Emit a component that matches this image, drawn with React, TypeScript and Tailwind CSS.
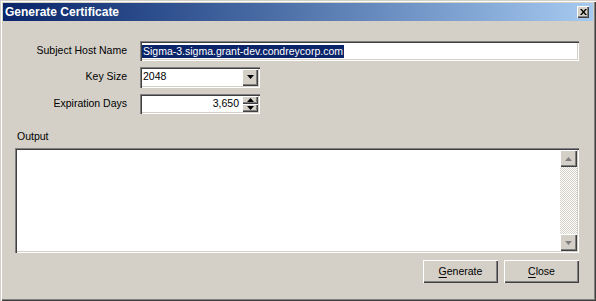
import React from 'react'

const sunken =
  'shadow-[inset_1px_1px_0_#808080,inset_2px_2px_0_#404040,inset_-1px_-1px_0_#ffffff,inset_-2px_-2px_0_#d4d0c8]'
const raised =
  'shadow-[inset_1px_1px_0_#ffffff,inset_-1px_-1px_0_#404040,inset_-2px_-2px_0_#808080]'

function Arrow({ dir, color = '#000' }: { dir: 'up' | 'down'; color?: string }) {
  return (
    <svg width="7" height="4" viewBox="0 0 7 4">
      {dir === 'down' ? (
        <polygon points="0,0 7,0 3.5,4" fill={color} />
      ) : (
        <polygon points="0,4 7,4 3.5,0" fill={color} />
      )}
    </svg>
  )
}

function Label({ children }: { children: React.ReactNode }) {
  return <div className="w-[125px] text-right pr-[1px]">{children}</div>
}

export default function App() {
  return (
    <div className="w-[596px] h-[301px] bg-[#d4d0c8] p-[3px] flex flex-col text-[10.5px] text-black font-['Liberation_Sans',Arial,sans-serif] shadow-[inset_1px_1px_0_#d4d0c8,inset_2px_2px_0_#ffffff,inset_-1px_-1px_0_#404040,inset_-2px_-2px_0_#808080]">
      {/* Title bar */}
      <div className="h-[18px] flex items-center justify-between pl-[2px] pr-[4px] bg-gradient-to-r from-[#0a246a] to-[#a6caf0]">
        <span className="text-white font-bold text-[12px] leading-none">Generate Certificate</span>
        <div className={`w-[12px] h-[12px] bg-[#d4d0c8] flex items-center justify-center ${raised}`}>
          <svg width="7" height="6" viewBox="0 0 7 6">
            <path d="M0 0 L1.8 0 L3.5 2 L5.2 0 L7 0 L4.4 3 L7 6 L5.2 6 L3.5 4 L1.8 6 L0 6 L2.6 3 Z" fill="#000" />
          </svg>
        </div>
      </div>

      {/* Form */}
      <div className="mt-[20px] flex flex-col">
        <div className="flex items-center h-[20px]">
          <Label>Subject Host Name</Label>
          <div className={`ml-[12px] w-[439px] h-[20px] bg-white flex items-center pl-[2px] ${sunken}`}>
            <span className="bg-[#0a246a] text-white leading-[13px] px-[1px]">
              Sigma-3.sigma.grant-dev.condreycorp.com
            </span>
          </div>
        </div>

        <div className="flex items-center h-[20px] mt-[6px]">
          <Label>Key Size</Label>
          <div className={`ml-[12px] w-[120px] h-[21px] bg-white flex items-center justify-between pl-[3px] pr-[2px] ${sunken}`}>
            <span>2048</span>
            <div className={`w-[16px] h-[17px] bg-[#d4d0c8] flex items-center justify-center ${raised}`}>
              <Arrow dir="down" />
            </div>
          </div>
        </div>

        <div className="flex items-center h-[20px] mt-[7px]">
          <Label>Expiration Days</Label>
          <div className={`ml-[12px] w-[120px] h-[20px] bg-white flex items-center justify-end pr-[2px] ${sunken}`}>
            <span className="mr-[3px]">3,650</span>
            <div className="w-[16px] h-[16px] flex flex-col">
              <div className={`h-[8px] bg-[#d4d0c8] flex items-center justify-center ${raised}`}>
                <Arrow dir="up" />
              </div>
              <div className={`h-[8px] bg-[#d4d0c8] flex items-center justify-center ${raised}`}>
                <Arrow dir="down" />
              </div>
            </div>
          </div>
        </div>
      </div>

      {/* Output */}
      <div className="ml-[14px] mt-[16px] leading-[13px]">Output</div>
      <div className={`ml-[12px] mt-[5px] w-[564px] h-[105px] bg-white flex justify-end p-[2px] ${sunken}`}>
        <div className="w-[17px] h-full flex flex-col">
          <div className={`h-[17px] bg-[#d4d0c8] flex items-center justify-center ${raised}`}>
            <Arrow dir="up" color="#808080" />
          </div>
          <div className="flex-1 bg-[repeating-conic-gradient(#d4d0c8_0_25%,#ffffff_0_50%)] bg-[length:2px_2px]" />
          <div className={`h-[17px] bg-[#d4d0c8] flex items-center justify-center ${raised}`}>
            <Arrow dir="down" color="#808080" />
          </div>
        </div>
      </div>

      {/* Buttons */}
      <div className="mt-[7px] mr-[14px] flex justify-end gap-[6px]">
        <button className={`w-[75px] h-[23px] bg-[#d4d0c8] ${raised}`}>
          <span className="underline underline-offset-[2px]">G</span>enerate
        </button>
        <button className={`w-[75px] h-[23px] bg-[#d4d0c8] ${raised}`}>
          <span className="underline underline-offset-[2px]">C</span>lose
        </button>
      </div>
    </div>
  )
}
